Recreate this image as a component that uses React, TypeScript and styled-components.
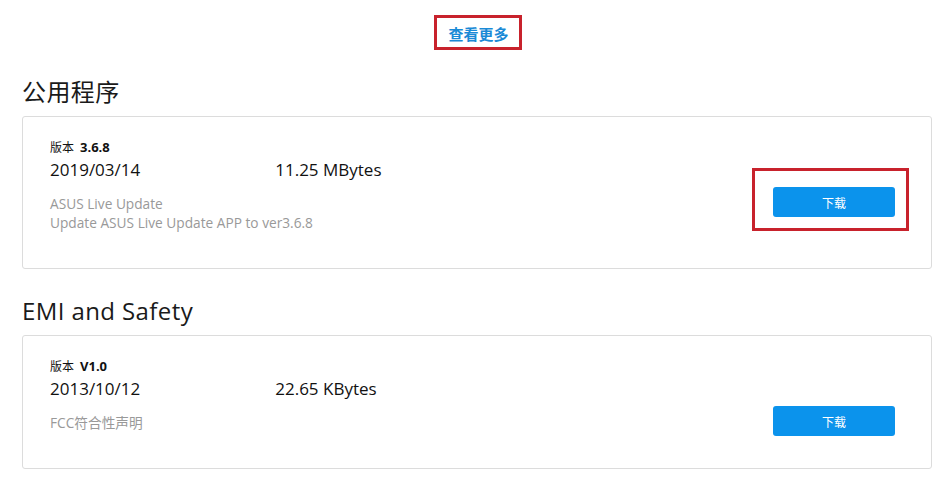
import React from "react";
import styled, { createGlobalStyle } from "styled-components";

const GlobalStyle = createGlobalStyle`
  html, body {
    margin: 0;
    padding: 0;
    background: #fff;
  }
  body {
    font-family: "Open Sans", "Noto Sans CJK SC", sans-serif;
    color: #1a1a1a;
  }
`;

const Page = styled.div`
  padding: 15px 16px 20px 22px;
  display: flex;
  flex-direction: column;
`;

const MoreRow = styled.div`
  display: flex;
  justify-content: center;
  padding-left: 2px;
`;

const MoreLink = styled.a`
  display: block;
  height: 29px;
  padding: 0 10px 0 11px;
  border: 3px solid #c8222c;
  font-family: "Noto Sans CJK SC", sans-serif;
  font-size: 15px;
  font-weight: 700;
  line-height: 31px;
  color: #1a8ad6;
  text-decoration: none;
  overflow: hidden;
`;

const SectionTitle = styled.h2`
  margin: 26px 0 8px;
  height: 32px;
  font-size: 24px;
  font-weight: 400;
  line-height: 32px;
  letter-spacing: 0.4px;
  color: #1a1a1a;
`;

const Card = styled.div`
  display: flex;
  justify-content: space-between;
  align-items: flex-start;
  border: 1px solid #dcdcdc;
  border-radius: 3px;
  padding: 21px 36px 32px 27px;
`;

const Info = styled.div`
  display: flex;
  flex-direction: column;
  padding-bottom: 4px;
`;

const Version = styled.div`
  height: 20px;
  font-size: 13px;
  line-height: 18px;
  color: #111;

  b {
    font-weight: 700;
  }
`;

const VersionLabel = styled.span`
  font-family: "Noto Sans CJK SC", sans-serif;
  font-size: 12px;
  margin-right: 6px;
`;

const MetaRow = styled.div`
  display: flex;
  gap: 135px;
  height: 24px;
  font-size: 17px;
  line-height: 24px;
  color: #111;
`;

const Description = styled.div`
  margin-top: 12px;
  font-size: 13.7px;
  line-height: 19px;
  color: #999;
`;

const DescriptionLine = styled.div`
  height: 19px;
`;

const ButtonWrap = styled.div<{ $marked?: boolean }>`
  position: relative;
  margin-top: 49px;

  ${({ $marked }) =>
    $marked &&
    `
    &::after {
      content: "";
      position: absolute;
      top: -19px;
      left: -21px;
      right: -14px;
      bottom: -14px;
      border: 3px solid #c8222c;
      pointer-events: none;
    }
  `}
`;

const DownloadButton = styled.button`
  display: block;
  width: 122px;
  height: 30px;
  border: none;
  border-radius: 3px;
  background: #0b93ec;
  color: #fff;
  font-family: "Noto Sans CJK SC", sans-serif;
  font-size: 12px;
  cursor: pointer;
`;

type Item = {
  title: string;
  version: string;
  date: string;
  size: string;
  lines: string[];
  marked?: boolean;
};

const items: Item[] = [
  {
    title: "公用程序",
    version: "3.6.8",
    date: "2019/03/14",
    size: "11.25 MBytes",
    lines: ["ASUS Live Update", "Update ASUS Live Update APP to ver3.6.8"],
    marked: true,
  },
  {
    title: "EMI and Safety",
    version: "V1.0",
    date: "2013/10/12",
    size: "22.65 KBytes",
    lines: ["FCC符合性声明"],
  },
];

export default function App() {
  return (
    <>
      <GlobalStyle />
      <Page>
        <MoreRow>
          <MoreLink href="#">查看更多</MoreLink>
        </MoreRow>
        {items.map((item) => (
          <section key={item.title}>
            <SectionTitle>{item.title}</SectionTitle>
            <Card>
              <Info>
                <Version>
                  <VersionLabel>版本</VersionLabel>
                  <b>{item.version}</b>
                </Version>
                <MetaRow>
                  <span>{item.date}</span>
                  <span>{item.size}</span>
                </MetaRow>
                <Description>
                  {item.lines.map((l) => (
                    <DescriptionLine key={l}>{l}</DescriptionLine>
                  ))}
                </Description>
              </Info>
              <ButtonWrap $marked={item.marked}>
                <DownloadButton>下载</DownloadButton>
              </ButtonWrap>
            </Card>
          </section>
        ))}
      </Page>
    </>
  );
}
